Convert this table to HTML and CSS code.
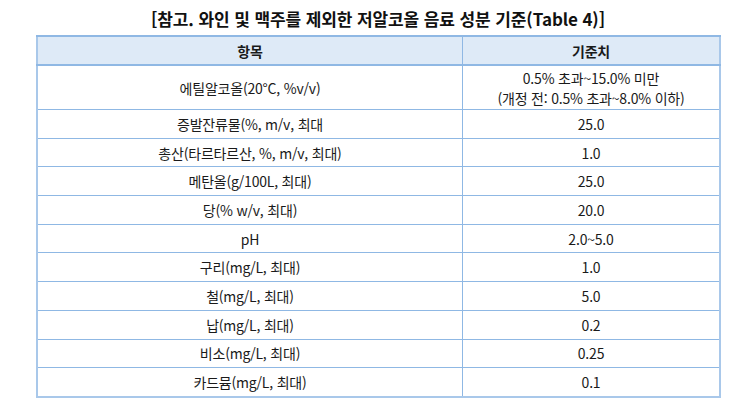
FILE: index.html
```html
<!DOCTYPE html>
<html lang="ko">
<head>
<meta charset="utf-8">
<link rel="stylesheet" href="styles.css">
</head>
<body>
<div class="page">
  <h1 class="title">[참고. 와인 및 맥주를 제외한 저알코올 음료 성분 기준(Table 4)]</h1>
  <table class="spec">
    <thead>
      <tr><th class="col-item">항목</th><th class="col-std">기준치</th></tr>
    </thead>
    <tbody>
      <tr class="tall"><td>에틸알코올(20°C, %v/v)</td><td>0.5% 초과~15.0% 미만<br>(개정 전: 0.5% 초과~8.0% 이하)</td></tr>
      <tr><td>증발잔류물(%, m/v, 최대</td><td>25.0</td></tr>
      <tr><td>총산(타르타르산, %, m/v, 최대)</td><td>1.0</td></tr>
      <tr><td>메탄올(g/100L, 최대)</td><td>25.0</td></tr>
      <tr><td>당(% w/v, 최대)</td><td>20.0</td></tr>
      <tr><td>pH</td><td>2.0~5.0</td></tr>
      <tr><td>구리(mg/L, 최대)</td><td>1.0</td></tr>
      <tr><td>철(mg/L, 최대)</td><td>5.0</td></tr>
      <tr><td>납(mg/L, 최대)</td><td>0.2</td></tr>
      <tr><td>비소(mg/L, 최대)</td><td>0.25</td></tr>
      <tr><td>카드뮴(mg/L, 최대)</td><td>0.1</td></tr>
    </tbody>
  </table>
</div>
</body>
</html>
```
FILE: styles.css
```css
html, body {
  margin: 0;
  padding: 0;
  background: #ffffff;
}
body {
  font-family: "Noto Sans CJK KR", "Noto Sans", sans-serif;
  color: #1a1a1a;
}
.page {
  width: 756px;
  display: flex;
  flex-direction: column;
  align-items: center;
}
.title {
  margin: 7px 0 0 0;
  height: 28px;
  font-size: 17px;
  font-weight: 700;
  line-height: 23px;
  letter-spacing: -0.1px;
  color: #111;
}
.spec {
  margin-left: 36px;
  align-self: flex-start;
  width: 682px;
  border-collapse: collapse;
  table-layout: fixed;
  font-size: 14px;
  letter-spacing: -0.2px;
  border-left: 2px solid #a9c8ea;
  border-right: 2px solid #a9c8ea;
  border-bottom: 2px solid #a9c8ea;
}
.spec th, .spec td {
  border: 1px solid #8fb8e4;
  text-align: center;
  vertical-align: middle;
  padding: 0;
  line-height: 18px;
}
.spec th {
  background: #deeaf7;
  font-weight: 700;
  height: 27px;
  border-top: 2px solid #8fb8e4;
  border-bottom: 2px solid #8fb8e4;
}
.col-item { width: 424px; }
.col-std { width: 256px; }
.spec td { height: 27.7px; }
.spec tr.tall td {
  height: 43px;
  line-height: 20px;
}
```
